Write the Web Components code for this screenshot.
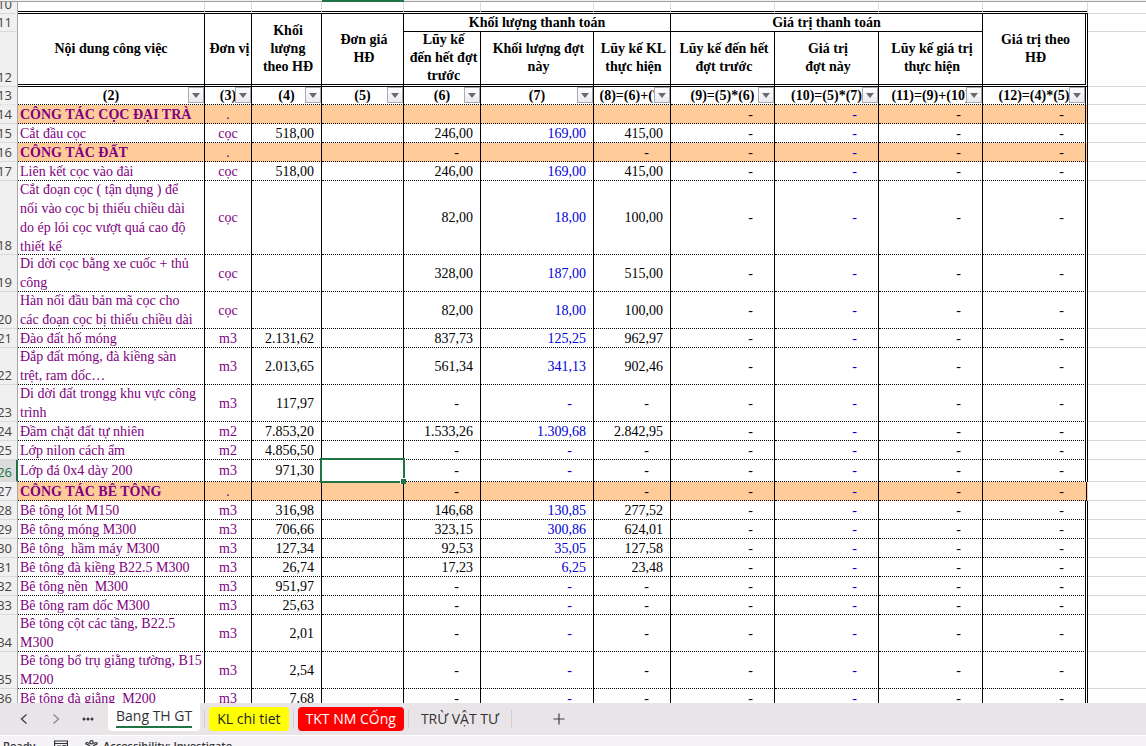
<!DOCTYPE html>
<html lang="vi">
<head>
<meta charset="utf-8">
<title>Bang TH GT</title>
<style>
html, body { margin: 0; height: 100%; }
body { background: #fff; overflow: hidden; }
</style>
</head>
<body>
<workbook-app></workbook-app>
<script>
class FilterButton extends HTMLElement {
  connectedCallback() {
    this.attachShadow({ mode: 'open' }).innerHTML = `
      <style>
        :host { display: block; width: 16px; height: 16px; }
        button { display: flex; align-items: center; justify-content: center; box-sizing: border-box; width: 100%; height: 100%; padding: 0; border: 1px solid #a9abb0; background: linear-gradient(#fdfdfe, #e9ebf0); }
      </style>
      <button type="button" aria-label="Lọc"><svg width="8" height="5" viewBox="0 0 8 5"><path d="M0 0h8L4 5z" fill="#6a6a6e"/></svg></button>`;
  }
}
customElements.define('filter-button', FilterButton);

const ROWS = [
  [14, 19, 'CÔNG TÁC CỌC ĐẠI TRÀ', '.', '', '', '', '', 'g'],
  [15, 19, 'Cắt đầu cọc', 'cọc', '518,00', '246,00', '169,00', '415,00'],
  [16, 19, 'CÔNG TÁC ĐẤT', '.', '', '-', '', '-', 'g'],
  [17, 19, 'Liên kết cọc vào đài', 'cọc', '518,00', '246,00', '169,00', '415,00'],
  [18, 74, 'Cắt đoạn cọc ( tận dụng ) để<br>nối vào cọc bị thiếu chiều dài<br>do ép lói cọc vượt quá cao độ<br>thiết kế', 'cọc', '', '82,00', '18,00', '100,00'],
  [19, 37, 'Di dời cọc bằng xe cuốc + thủ<br>công', 'cọc', '', '328,00', '187,00', '515,00'],
  [20, 37, 'Hàn nối đầu bản mã cọc cho<br>các đoạn cọc bị thiếu chiều dài', 'cọc', '', '82,00', '18,00', '100,00'],
  [21, 19, 'Đào đất hố móng', 'm3', '2.131,62', '837,73', '125,25', '962,97'],
  [22, 37, 'Đắp đất móng, đà kiềng sàn<br>trệt, ram dốc…', 'm3', '2.013,65', '561,34', '341,13', '902,46'],
  [23, 37, 'Di dời đất trongg khu vực công<br>trình', 'm3', '117,97', '-', '-', '-'],
  [24, 19, 'Đầm chặt đất tự nhiên', 'm2', '7.853,20', '1.533,26', '1.309,68', '2.842,95'],
  [25, 19, 'Lớp nilon cách ẩm', 'm2', '4.856,50', '-', '-', '-'],
  [26, 22, 'Lớp đá 0x4 dày 200', 'm3', '971,30', '-', '-', '-', 'active'],
  [27, 19, 'CÔNG TÁC BÊ TÔNG', '.', '', '-', '', '-', 'g thin'],
  [28, 19, 'Bê tông lót M150', 'm3', '316,98', '146,68', '130,85', '277,52'],
  [29, 19, 'Bê tông móng M300', 'm3', '706,66', '323,15', '300,86', '624,01'],
  [30, 19, 'Bê tông&nbsp; hầm máy M300', 'm3', '127,34', '92,53', '35,05', '127,58'],
  [31, 19, 'Bê tông đà kiềng B22.5 M300', 'm3', '26,74', '17,23', '6,25', '23,48'],
  [32, 19, 'Bê tông nền&nbsp; M300', 'm3', '951,97', '-', '-', '-'],
  [33, 19, 'Bê tông ram dốc M300', 'm3', '25,63', '-', '-', '-'],
  [34, 37, 'Bê tông cột các tầng, B22.5<br>M300', 'm3', '2,01', '-', '-', '-'],
  [35, 37, 'Bê tông bổ trụ giằng tường, B15<br>M200', 'm3', '2,54', '-', '-', '-'],
  [36, 19, 'Bê tông đà giằng&nbsp; M200', 'm3', '7,68', '-', '-', '-']
];
const WIDTHS = [18, 187, 47, 70, 82, 77, 113, 77, 104, 104, 104, 105];
const CODES = ['(2)', '(3)', '(4)', '(5)', '(6)', '(7)', '(8)=(6)+(7)', '(9)=(5)*(6)', '(10)=(5)*(7)', '(11)=(9)+(10)', '(12)=(4)*(5)'];

class SheetGrid extends HTMLElement {
  connectedCallback() {
    const num = (v, cls = '') => `<td class="num ${cls} ${v === '-' ? 'dash' : ''}"><div>${v}</div></td>`;
    const head = n => `<th class="rh" scope="row"><div>${n}</div></th>`;
    const body = ROWS.map(([n, h, name, unit, qty, prev, cur, total, cls = '']) => `
      <tr class="${cls}" style="--h:${h}px">${head(n)}
        <td class="name"><div><span>${name}</span></div></td>
        <td class="unit"><div>${unit}</div></td>
        ${num(qty)}
        <td class="price"><div></div>${cls === 'active' ? '<i class="cursor"></i>' : ''}</td>
        ${num(prev)}${num(cur, 'blue')}${num(total)}${num('-')}${num('-', 'blue')}${num('-')}${num('-', 'last')}
        <td class="out"></td></tr>`).join('');
    this.attachShadow({ mode: 'open' }).innerHTML = `
      <style>
        :host { display: block; overflow: hidden; background: #fff; font: 14px/19px "Liberation Serif", serif; color: #000; }
        table { width: 100%; table-layout: fixed; border-collapse: separate; border-spacing: 0; }
        th, td { position: relative; box-sizing: border-box; padding: 0; border: 0 solid #000; border-right-width: 1px; border-bottom-width: 1px; height: var(--h); white-space: nowrap; }
        div { box-sizing: border-box; display: flex; align-items: center; justify-content: center; text-align: center; height: calc(var(--h) - 1px); overflow: hidden; }
        tbody td { border-bottom-style: dotted; }
        .num div { justify-content: flex-end; padding-right: 7px; }
        .dash div { padding-right: 21px; }
        .name div { justify-content: flex-start; text-align: left; padding-left: 2px; }
        .name, .unit { color: #800080; }
        .blue { color: #0000d8; }
        .g td { background: #ffcc99; }
        .g .out { background: none; }
        .g .name { font-weight: 700; }
        .last { border-right: 3px double #000; }
        .thin .last { border-right-color: transparent; background: linear-gradient(#000, #000) right 1px top 0 / 1px 100% no-repeat border-box, #ffcc99; }
        tr .out { border-right: 0; border-bottom: 1px solid #d9d9d9; }
        tr .rh { border-right: 1px solid #a6a6a6; border-bottom: 1px solid #dadada; background: #f0f0f0; color: #444; font: 13px/18px "Open Sans", sans-serif; }
        .rh div { align-items: flex-end; justify-content: flex-end; padding-right: 5px; }
        .active .rh { background: #dcdcdc; color: #217346; border-right: 2px solid #217346; }
        .active .rh div { padding-right: 4px; }
        .cursor { position: absolute; z-index: 2; inset: -2px; border: 2px solid #217346; }
        .cursor::after { content: ""; position: absolute; right: -3px; bottom: -3px; width: 5px; height: 5px; background: #217346; border: solid #fff; border-width: 1px 0 0 1px; }
        .letters td { border-right: 0; border-bottom: 1px solid #9f9f9f; background: #f0f0f0; }
        .letters .sel { background: #217346; border-color: #217346; }
        .blank td { border-right-color: #dcdcdc; border-bottom: 3px double #000; }
        .blank .out { border-bottom: 1px solid #d9d9d9; }
        thead th { font-size: 14px; line-height: 18px; }
        thead .dbl { border-bottom: 3px double #000; }
        .dbl div { height: auto; overflow: visible; padding-left: 3px; }
        .dbl.first div { padding-left: 0; }
        thead .last { border-right: 3px double #000; }
        .codes th { border-bottom-style: dotted; }
        .dbl.clip div { height: 52px; overflow: hidden; }
        filter-button { position: absolute; right: 0; top: 0; }
      </style>
      <table>
        <colgroup>${WIDTHS.map(w => `<col style="width:${w}px">`).join('')}<col></colgroup>
        <thead>
          <tr class="letters" style="--h:2px">${[0,1,2,3,4,5,6,7,8,9,10,11,12].map(i => `<td class="${i === 4 ? 'sel' : ''}"></td>`).join('')}</tr>
          <tr class="blank" style="--h:12px">${head(10)}${'<td></td>'.repeat(11)}<td class="out"></td></tr>
          <tr style="--h:18px">${head(11)}
            <th class="dbl first" rowspan="2"><div>Nội dung công việc</div></th>
            <th class="dbl" rowspan="2"><div>Đơn vị</div></th>
            <th class="dbl" rowspan="2"><div>Khối<br>lượng<br>theo HĐ</div></th>
            <th class="dbl" rowspan="2"><div>Đơn giá<br>HĐ</div></th>
            <th colspan="3"><div>Khối lượng thanh toán</div></th>
            <th colspan="3"><div>Giá trị thanh toán</div></th>
            <th class="dbl last" rowspan="2"><div>Giá trị theo<br>HĐ</div></th>
            <td class="out"></td></tr>
          <tr style="--h:55px">${head(12)}
            <th class="dbl clip"><div>Lũy kế<br>đến hết đợt<br>trước</div></th>
            <th class="dbl"><div>Khối lượng đợt<br>này</div></th>
            <th class="dbl"><div>Lũy kế KL<br>thực hiện</div></th>
            <th class="dbl"><div>Lũy kế đến hết<br>đợt trước</div></th>
            <th class="dbl"><div>Giá trị<br>đợt này</div></th>
            <th class="dbl"><div>Lũy kế giá trị<br>thực hiện</div></th>
            <td class="out"></td></tr>
          <tr class="codes" style="--h:18px">${head(13)}
            ${CODES.map((c, i) => `<th class="${i === 10 ? 'last' : ''}"><div>${c}</div><filter-button></filter-button></th>`).join('')}
            <td class="out"></td></tr>
        </thead>
        <tbody>${body}</tbody>
      </table>`;
  }
}
customElements.define('sheet-grid', SheetGrid);

class SheetTab extends HTMLElement {
  connectedCallback() {
    this.attachShadow({ mode: 'open' }).innerHTML = `
      <style>
        :host { display: flex; }
        button { border: 0; margin: 4px 0; height: 24px; padding: 0 8px; border-radius: 4px; background: var(--tab, transparent); color: var(--ink, #333); font: 14px/24px "Open Sans", sans-serif; white-space: nowrap; }
        :host([active]) button { margin: 0; height: 28px; background: #fff; border-radius: 0 0 4px 4px; }
        span { display: block; }
        :host([active]) span { height: 23px; line-height: 26px; margin-bottom: 3px; border-bottom: 2px solid #217346; }
      </style>
      <button type="button"><span><slot></slot></span></button>`;
  }
}
customElements.define('sheet-tab', SheetTab);

class SheetTabs extends HTMLElement {
  connectedCallback() {
    this.attachShadow({ mode: 'open' }).innerHTML = `
      <style>
        :host { display: flex; height: 32px; background: #e9e4e8; }
        nav { display: flex; }
        .tool { width: 32px; height: 32px; padding: 0; border: 0; background: none; display: flex; align-items: center; justify-content: center; }
        .tools { display: flex; padding: 0 4px 0 8px; }
        hr { width: 1px; height: 18px; margin: 7px 4px; border: 0; background: #d3ced2; }
        .yellow { --tab: #ffff00; --ink: #222; }
        .red { --tab: #ff0000; --ink: #fff; }
        .add { margin-left: 27px; }
      </style>
      <div class="tools">
        <button class="tool" type="button" aria-label="Trước"><svg width="8" height="12" viewBox="0 0 8 12" fill="none" stroke="#444" stroke-width="1.4"><path d="M6.500 1.500L1.500 6l5 4.500"/></svg></button>
        <button class="tool" type="button" aria-label="Sau"><svg width="8" height="12" viewBox="0 0 8 12" fill="none" stroke="#8a868a" stroke-width="1.300"><path d="M1.500 1.500l5 4.500-5 4.500"/></svg></button>
        <button class="tool" type="button" aria-label="Thêm"><svg width="12" height="4" viewBox="0 0 12 4" fill="#333"><circle cx="2" cy="2" r="1.500"/><circle cx="6" cy="2" r="1.500"/><circle cx="10" cy="2" r="1.500"/></svg></button>
      </div>
      <nav>
        <sheet-tab active>Bang TH GT</sheet-tab><hr>
        <sheet-tab class="yellow">KL chi tiet</sheet-tab><hr>
        <sheet-tab class="red">TKT NM CỐng</sheet-tab><hr>
        <sheet-tab>TRỪ VẬT TƯ</sheet-tab><hr>
      </nav>
      <button class="tool add" type="button" aria-label="Trang mới"><svg width="12" height="12" viewBox="0 0 12 12" stroke="#444" stroke-width="1.200"><path d="M6 0.500v11M0.500 6h11"/></svg></button>`;
  }
}
customElements.define('sheet-tabs', SheetTabs);

class StatusBar extends HTMLElement {
  connectedCallback() {
    this.attachShadow({ mode: 'open' }).innerHTML = `
      <style>
        :host { display: flex; align-items: flex-start; height: 11px; box-sizing: border-box; padding: 4px 3px 0; overflow: hidden; background: #f5f3f7; border-top: 1px solid #fff; color: #333; font: 600 11px/12px "Open Sans", sans-serif; }
        .state { width: 51px; }
        svg { flex: none; }
        .macro { margin-right: 17px; }
        .person { margin-right: 5px; }
      </style>
      <span class="state">Ready</span>
      <svg class="macro" width="14" height="12" viewBox="0 0 14 12" fill="none" stroke="#333" stroke-width="1.200"><path d="M.6 11V1h12.800v5M.6 3.500h12.800M3 6h4M3 8h3"/><circle cx="10" cy="8" r="2.500"/></svg>
      <svg class="person" width="13" height="13" viewBox="0 0 13 13" fill="none" stroke="#333" stroke-width="1.200"><circle cx="6.500" cy="2.300" r="1.700"/><path d="M4.500 3.500L2 2.500Q.5 2.800 1 4l3.500 1.500V8L3 12M8.500 3.500L11 2.500q1.500.3 1 1.500L8.500 5.500V8l1.500 4"/></svg>
      <span>Accessibility: Investigate</span>`;
  }
}
customElements.define('status-bar', StatusBar);

class WorkbookApp extends HTMLElement {
  connectedCallback() {
    this.attachShadow({ mode: 'open' }).innerHTML = `
      <style>
        :host { display: flex; flex-direction: column; height: 100vh; overflow: hidden; }
        sheet-grid { flex: 1; min-height: 0; }
        sheet-tabs, status-bar { flex: none; }
      </style>
      <sheet-grid></sheet-grid><sheet-tabs></sheet-tabs><status-bar></status-bar>`;
  }
}
customElements.define('workbook-app', WorkbookApp);
</script>
</body>
</html>
